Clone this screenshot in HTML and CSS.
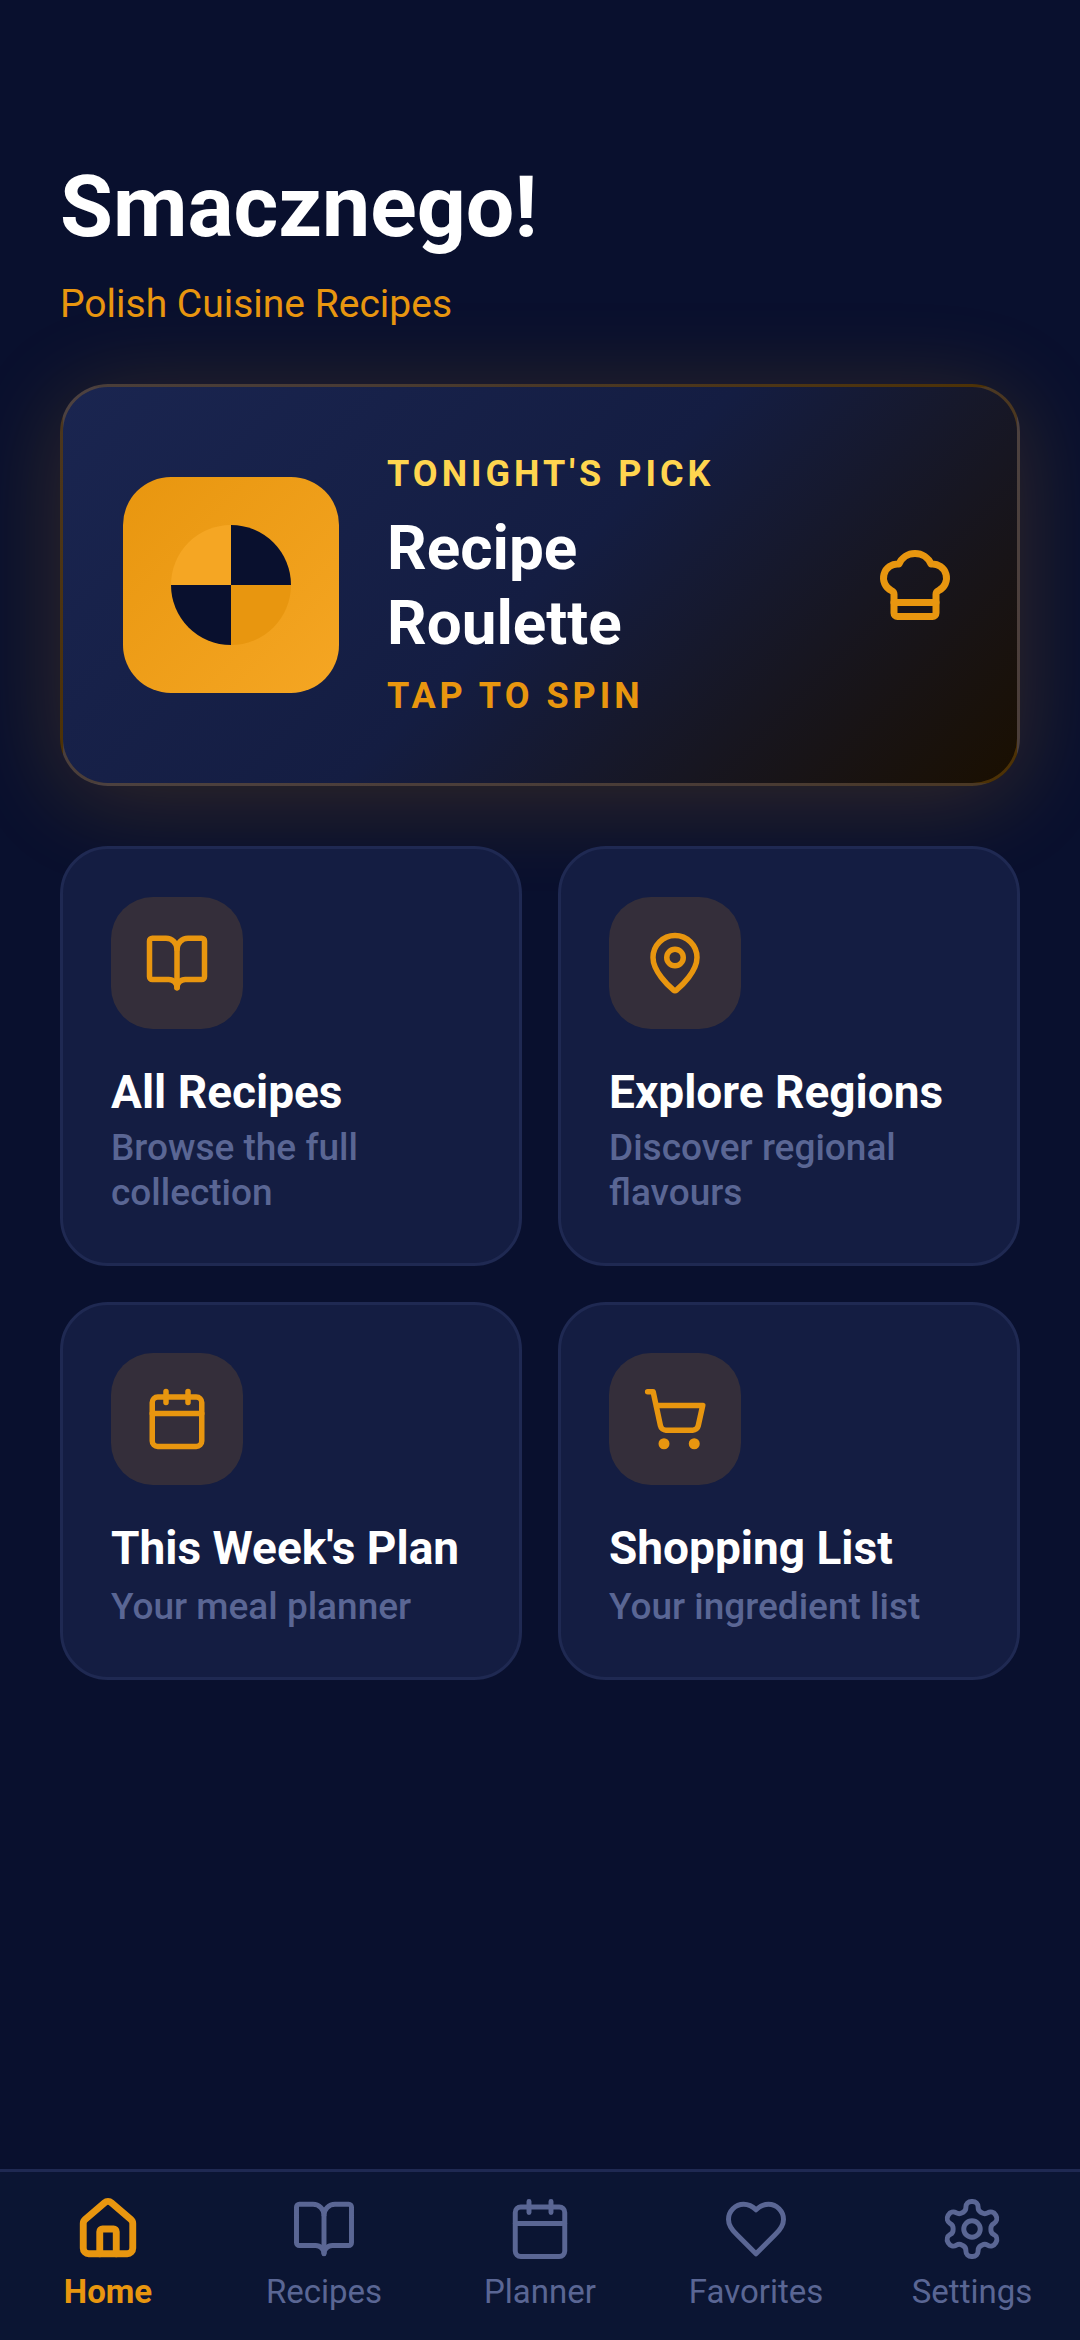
FILE: index.html
```
<!DOCTYPE html>
<html lang="en">
<head>
    <meta charset="UTF-8">
    <meta name="viewport" content="width=device-width, initial-scale=1.0">
    <title>Smacznego!</title>
    <link rel="stylesheet" href="styles.css">
</head>
<body>
    <main class="content">
        <header class="header">
            <h1>Smacznego!</h1>
            <p>Polish Cuisine Recipes</p>
        </header>

        <button class="hero" type="button">
            <span class="hero-tile"><span class="wheel"></span></span>
            <span class="hero-text">
                <span class="hero-label">TONIGHT'S PICK</span>
                <span class="hero-title">Recipe<br>Roulette</span>
                <span class="hero-action">TAP TO SPIN</span>
            </span>
            <svg class="hero-icon" viewBox="0 0 24 24">
                <path d="M17 21a1 1 0 0 0 1-1v-5.35c0-.457.316-.844.727-1.041a4 4 0 0 0-2.134-7.589 5 5 0 0 0-9.186 0 4 4 0 0 0-2.134 7.588c.411.198.727.585.727 1.041V20a1 1 0 0 0 1 1Z"/>
                <path d="M6 17h12"/>
            </svg>
        </button>

        <div class="grid">
            <a class="card" href="#recipes">
                <span class="card-tile">
                    <svg viewBox="0 0 24 24">
                        <path d="M12 7v14"/>
                        <path d="M3 18a1 1 0 0 1-1-1V4a1 1 0 0 1 1-1h5a4 4 0 0 1 4 4 4 4 0 0 1 4-4h5a1 1 0 0 1 1 1v13a1 1 0 0 1-1 1h-6a3 3 0 0 0-3 3 3 3 0 0 0-3-3z"/>
                    </svg>
                </span>
                <h2>All Recipes</h2>
                <p>Browse the full collection</p>
            </a>
            <a class="card" href="#regions">
                <span class="card-tile">
                    <svg viewBox="0 0 24 24">
                        <path d="M20 10c0 4.993-5.539 10.193-7.399 11.799a1 1 0 0 1-1.202 0C9.539 20.193 4 14.993 4 10a8 8 0 0 1 16 0"/>
                        <circle cx="12" cy="10" r="3"/>
                    </svg>
                </span>
                <h2>Explore Regions</h2>
                <p>Discover regional flavours</p>
            </a>
            <a class="card card-short" href="#planner">
                <span class="card-tile">
                    <svg viewBox="0 0 24 24">
                        <path d="M8 2v4M16 2v4M3 10h18"/>
                        <rect x="3" y="4" width="18" height="18" rx="2"/>
                    </svg>
                </span>
                <h2>This Week's Plan</h2>
                <p>Your meal planner</p>
            </a>
            <a class="card card-short" href="#shopping">
                <span class="card-tile">
                    <svg viewBox="0 0 24 24">
                        <circle cx="8" cy="21" r="1"/>
                        <circle cx="19" cy="21" r="1"/>
                        <path d="M2.05 2.05h2l2.66 12.42a2 2 0 0 0 2 1.58h9.78a2 2 0 0 0 1.95-1.57l1.65-7.43H5.12"/>
                    </svg>
                </span>
                <h2>Shopping List</h2>
                <p>Your ingredient list</p>
            </a>
        </div>
    </main>

    <nav class="tabs">
        <a class="tab active" href="#home">
            <svg viewBox="0 0 24 24">
                <path d="M15 21v-8a1 1 0 0 0-1-1h-4a1 1 0 0 0-1 1v8"/>
                <path d="M3 10a2 2 0 0 1 .709-1.528l7-6a2 2 0 0 1 2.582 0l7 6A2 2 0 0 1 21 10v9a2 2 0 0 1-2 2H5a2 2 0 0 1-2-2z"/>
            </svg>
            <span>Home</span>
        </a>
        <a class="tab" href="#recipes">
            <svg viewBox="0 0 24 24">
                <path d="M12 7v14"/>
                <path d="M3 18a1 1 0 0 1-1-1V4a1 1 0 0 1 1-1h5a4 4 0 0 1 4 4 4 4 0 0 1 4-4h5a1 1 0 0 1 1 1v13a1 1 0 0 1-1 1h-6a3 3 0 0 0-3 3 3 3 0 0 0-3-3z"/>
            </svg>
            <span>Recipes</span>
        </a>
        <a class="tab" href="#planner">
            <svg viewBox="0 0 24 24">
                <path d="M8 2v4M16 2v4M3 10h18"/>
                <rect x="3" y="4" width="18" height="18" rx="2"/>
            </svg>
            <span>Planner</span>
        </a>
        <a class="tab" href="#favorites">
            <svg viewBox="0 0 24 24">
                <path d="M19 14c1.49-1.46 3-3.21 3-5.5A5.5 5.5 0 0 0 16.5 3c-1.76 0-3 .5-4.5 2-1.5-1.5-2.74-2-4.5-2A5.5 5.5 0 0 0 2 8.5c0 2.3 1.5 4.05 3 5.5l7 7Z"/>
            </svg>
            <span>Favorites</span>
        </a>
        <a class="tab" href="#settings">
            <svg viewBox="0 0 24 24">
                <path d="M12.22 2h-.44a2 2 0 0 0-2 2v.18a2 2 0 0 1-1 1.73l-.43.25a2 2 0 0 1-2 0l-.15-.08a2 2 0 0 0-2.73.73l-.22.38a2 2 0 0 0 .73 2.73l.15.1a2 2 0 0 1 1 1.72v.51a2 2 0 0 1-1 1.74l-.15.09a2 2 0 0 0-.73 2.73l.22.38a2 2 0 0 0 2.73.73l.15-.08a2 2 0 0 1 2 0l.43.25a2 2 0 0 1 1 1.73V20a2 2 0 0 0 2 2h.44a2 2 0 0 0 2-2v-.18a2 2 0 0 1 1-1.73l.43-.25a2 2 0 0 1 2 0l.15.08a2 2 0 0 0 2.73-.73l.22-.39a2 2 0 0 0-.73-2.73l-.15-.08a2 2 0 0 1-1-1.74v-.5a2 2 0 0 1 1-1.74l.15-.09a2 2 0 0 0 .73-2.73l-.22-.38a2 2 0 0 0-2.73-.73l-.15.08a2 2 0 0 1-2 0l-.43-.25a2 2 0 0 1-1-1.73V4a2 2 0 0 0-2-2z"/>
                <circle cx="12" cy="12" r="3"/>
            </svg>
            <span>Settings</span>
        </a>
    </nav>
</body>
</html>
```

FILE: styles.css
```
* {
    box-sizing: border-box;
}
body {
    display: flex;
    flex-direction: column;
    min-height: 100vh;
    margin: 0;
    font-family: Roboto, "Liberation Sans", sans-serif;
    color: #fff;
    background-color: #09102e;
}
h1, h2, p {
    margin: 0;
}
a {
    color: inherit;
    text-decoration: none;
}
svg {
    display: block;
    fill: none;
    stroke: currentColor;
    stroke-width: 2;
    stroke-linecap: round;
    stroke-linejoin: round;
}

.content {
    flex: 1;
    padding: 153px 60px 60px;
}
.header {
    margin-bottom: 54px;
}
.header h1 {
    font-size: 86px;
    line-height: 108px;
    font-weight: 700;
}
.header p {
    margin-top: 18px;
    font-size: 39px;
    line-height: 51px;
    color: #e8960f;
}

/* Roulette banner */
.hero {
    display: flex;
    align-items: center;
    gap: 48px;
    width: 100%;
    padding: 60px;
    border: 3px solid rgba(232, 150, 15, 0.25);
    border-radius: 48px;
    background: linear-gradient(135deg, #1a2550 0%, #141d42 50%, #1a0f00 100%);
    box-shadow: 0 12px 96px rgba(232, 150, 15, 0.2);
    font-family: inherit;
    color: #fff;
    text-align: left;
}
.hero-tile {
    display: flex;
    align-items: center;
    justify-content: center;
    width: 216px;
    height: 216px;
    border-radius: 48px;
    background: linear-gradient(135deg, #e8960f, #f5a623);
}
.wheel {
    width: 120px;
    height: 120px;
    border-radius: 50%;
    background: conic-gradient(#09102e 0 25%, #e8960f 0 50%, #09102e 0 75%, #f5a623 0);
}
.hero-text {
    display: flex;
    flex: 1;
    flex-direction: column;
    gap: 9px;
}
.hero-label,
.hero-action {
    font-size: 36px;
    line-height: 54px;
    font-weight: 700;
    letter-spacing: 4px;
}
.hero-label {
    color: #ffd54f;
}
.hero-action {
    color: #e8960f;
}
.hero-title {
    font-size: 62px;
    line-height: 75px;
    font-weight: 700;
}
.hero-icon {
    width: 84px;
    height: 84px;
    color: #e8960f;
}

/* Shortcut cards */
.grid {
    display: grid;
    grid-template-columns: 1fr 1fr;
    gap: 36px;
    margin-top: 60px;
}
.card {
    padding: 48px;
    border: 3px solid #1f2952;
    border-radius: 48px;
    background-color: #141d42;
}
.card-tile {
    display: flex;
    align-items: center;
    justify-content: center;
    width: 132px;
    height: 132px;
    margin-bottom: 36px;
    border-radius: 42px;
    background-color: rgba(232, 150, 15, 0.15);
    color: #e8960f;
}
.card-tile svg {
    width: 66px;
    height: 66px;
}
.card h2 {
    font-size: 46px;
    line-height: 54px;
    font-weight: 700;
}
.card p {
    margin-top: 6px;
    font-size: 37px;
    line-height: 45px;
    font-weight: 500;
    color: #5a6694;
}
.card-short p {
    margin-top: 9px;
}

/* Bottom tabs */
.tabs {
    display: flex;
    padding: 24px 0 27px;
    border-top: 3px solid #1f2952;
    background-color: #0b1533;
}
.tab {
    display: flex;
    flex: 1;
    flex-direction: column;
    align-items: center;
    gap: 9px;
    font-size: 33px;
    line-height: 42px;
    color: #5a6694;
}
.tab svg {
    width: 66px;
    height: 66px;
    stroke-width: 1.8;
}
.tab.active {
    font-weight: 700;
    color: #e8960f;
}
.tab.active svg {
    stroke-width: 2.5;
}
```
